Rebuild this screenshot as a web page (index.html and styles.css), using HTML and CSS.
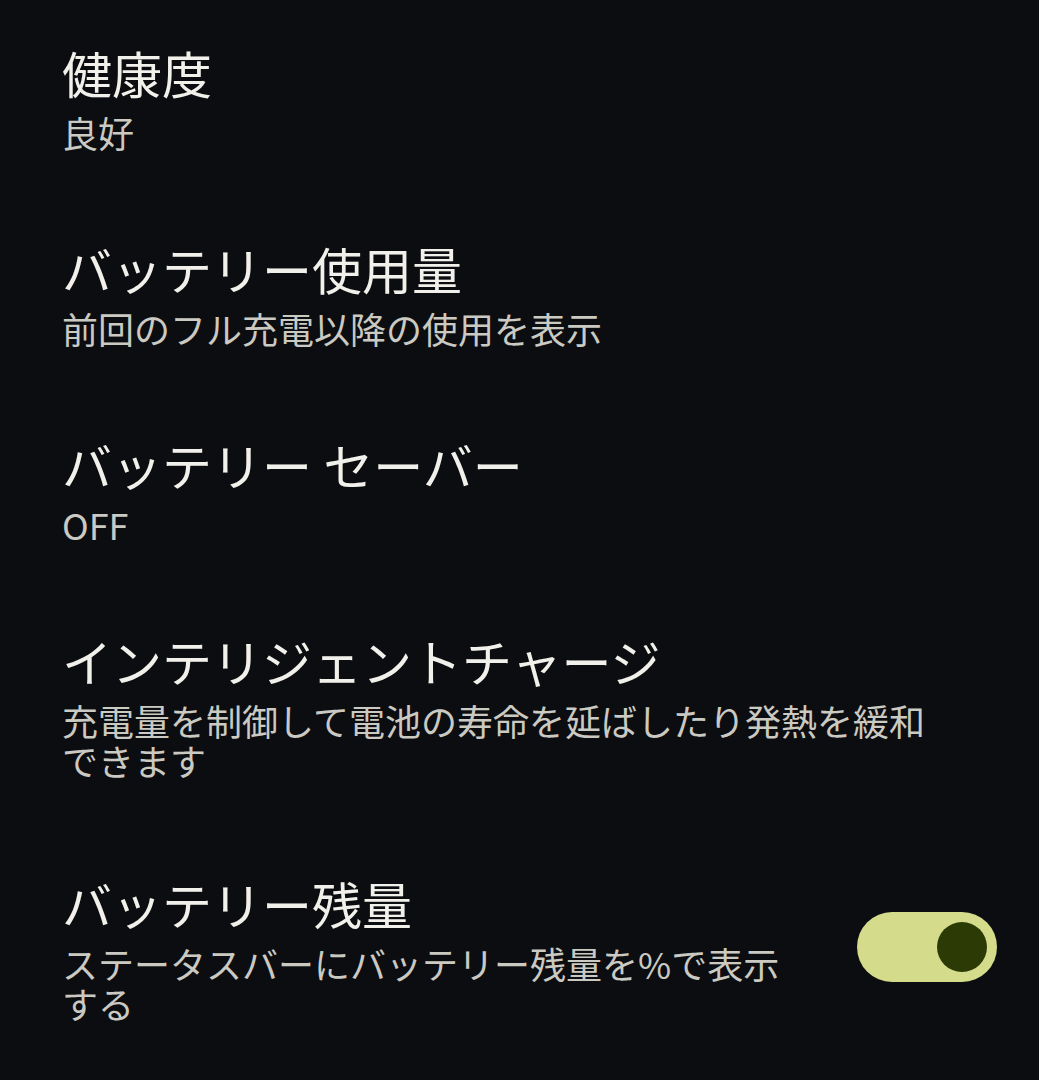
FILE: index.html
```html
<!DOCTYPE html>
<html lang="ja">
<head>
<meta charset="utf-8">
<link rel="stylesheet" href="styles.css">
</head>
<body>
<div class="list">
  <div class="item">
    <div class="text">
      <div class="title">健康度</div>
      <div class="summary">良好</div>
    </div>
  </div>
  <div class="item">
    <div class="text">
      <div class="title">バッテリー使用量</div>
      <div class="summary">前回のフル充電以降の使用を表示</div>
    </div>
  </div>
  <div class="item">
    <div class="text">
      <div class="title">バッテリー セーバー</div>
      <div class="summary">OFF</div>
    </div>
  </div>
  <div class="item item-tall">
    <div class="text">
      <div class="title">インテリジェントチャージ</div>
      <div class="summary">充電量を制御して電池の寿命を延ばしたり発熱を緩和できます</div>
    </div>
  </div>
  <div class="item">
    <div class="text">
      <div class="title">バッテリー残量</div>
      <div class="summary">ステータスバーにバッテリー残量を%で表示する</div>
    </div>
    <div class="switch"><div class="knob"></div></div>
  </div>
</div>
</body>
</html>
```

FILE: styles.css
```css
html, body {
  margin: 0;
  padding: 0;
  background: #0c0d10;
}
body {
  width: 1039px;
  height: 1080px;
  overflow: hidden;
  font-family: "Noto Sans CJK JP", "Noto Sans", sans-serif;
}
.list {
  display: flex;
  flex-direction: column;
}
.item {
  display: flex;
  align-items: center;
  padding: 40px 42px 44px 62px;
}
.item-tall {
  padding-bottom: 51px;
}
.text {
  flex: 1;
  max-width: 880px;
  display: flex;
  flex-direction: column;
  gap: 8px;
}
.title {
  font-size: 50px;
  line-height: 64px;
  color: #f1f0ea;
  white-space: nowrap;
}
.summary {
  font-size: 36px;
  line-height: 40px;
  color: #cac9c2;
}
.switch {
  flex: none;
  margin-left: 60px;
  width: 140px;
  height: 70px;
  border-radius: 35px;
  background: #d4dc8c;
  display: flex;
  align-items: center;
  justify-content: flex-end;
  padding-right: 10px;
  box-sizing: border-box;
}
.knob {
  width: 50px;
  height: 50px;
  border-radius: 50%;
  background: #2c3a06;
}
```
